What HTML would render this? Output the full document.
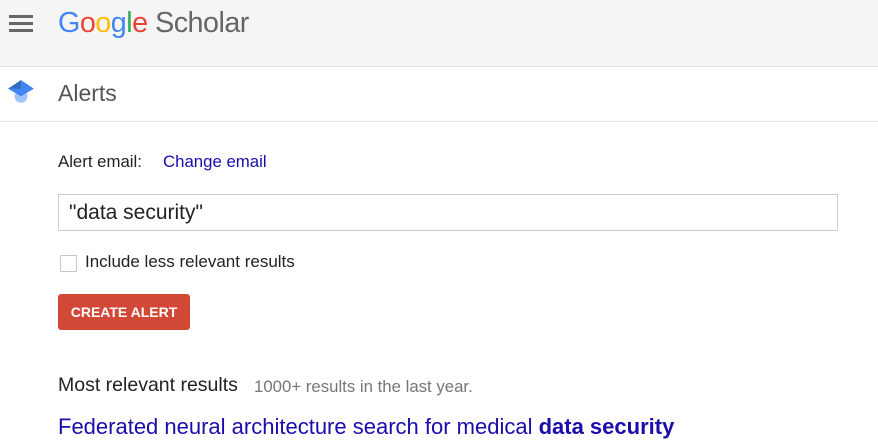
<!DOCTYPE html>
<html><head><style>
body{margin:0;width:878px;height:432px;overflow:hidden;font-family:"Liberation Sans",Arial,sans-serif;background:#fff;position:relative}
.a{position:absolute;white-space:nowrap}
</style></head><body>
<div class="a" style="left:0;top:0;width:878px;height:66px;background:#f5f5f5;border-bottom:1px solid #e0e0e0"></div>
<div class="a" style="left:9px;top:15px;width:24px;height:3px;background:#666;box-shadow:0 7px 0 #666,0 14px 0 #666"></div>
<div class="a" style="left:58px;top:3px;font-size:28.7px;letter-spacing:-0.5px;line-height:40px"><span style="color:#4285f4">G</span><span style="color:#ea4335">o</span><span style="color:#fbbc05">o</span><span style="color:#4285f4">g</span><span style="color:#34a853">l</span><span style="color:#ea4335">e</span> <span style="color:#666">Scholar</span></div>
<svg class="a" style="left:7px;top:79px" width="28" height="26" viewBox="0 0 26 24"><circle cx="13" cy="16" r="6" fill="#a1c2fa"/><path d="M1 9L13 1L25 9L13 16Z" fill="#4285f4"/><path d="M1 9L13 1L13 9Z" fill="#356ac3"/></svg>
<div class="a" style="left:58px;top:80px;font-size:23px;color:#555">Alerts</div>
<div class="a" style="left:0;top:121px;width:878px;height:1px;background:#e5e5e5"></div>
<div class="a" style="left:58px;top:152px;font-size:16.8px;color:#222">Alert email:</div>
<div class="a" style="left:163px;top:152px;font-size:16.8px;color:#1a0dab">Change email</div>
<div class="a" style="left:58px;top:194px;width:778px;height:35px;border:1px solid #ccc"></div>
<div class="a" style="left:69px;top:201px;font-size:21px;color:#222">"data security"</div>
<div class="a" style="left:60px;top:255px;width:15px;height:15px;border:1px solid #c6c6c6;border-radius:1px"></div>
<div class="a" style="left:85px;top:252px;font-size:17px;color:#222">Include less relevant results</div>
<div class="a" style="left:58px;top:294px;width:132px;height:36px;background:#d14836;border-radius:3px;color:#fff;font-size:14px;font-weight:bold;line-height:37px;text-align:center">CREATE ALERT</div>
<div class="a" style="left:58px;top:374px;font-size:19.5px;color:#222">Most relevant results</div>
<div class="a" style="left:254px;top:377px;font-size:16.8px;color:#777">1000+ results in the last year.</div>
<div class="a" style="left:58px;top:414px;font-size:22px;color:#1a0dab">Federated neural architecture search for medical <b>data security</b></div>
</body></html>
